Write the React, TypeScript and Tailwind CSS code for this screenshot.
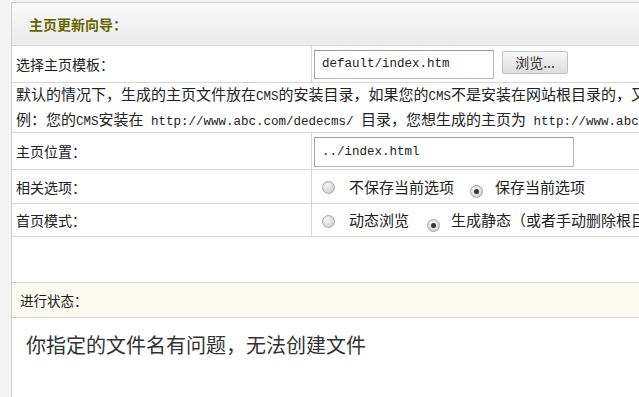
import React from "react";

const mono = "font-['Liberation_Mono',monospace] text-[12.5px]";

function Radio({ checked }: { checked?: boolean }) {
  return (
    <span className="relative inline-flex h-[13px] w-[13px] shrink-0 items-center justify-center rounded-full border border-[#a9a9a9] bg-[radial-gradient(circle_at_40%_35%,#f6f6f6_0%,#dcdcdc_55%,#c4c4c4_100%)]">
      {checked && <span className="h-[5px] w-[5px] rounded-full bg-[#333]" />}
    </span>
  );
}

export default function App() {
  return (
    <div className="h-[397px] w-[639px] overflow-hidden bg-[#f4f4f4] pl-[11px] pt-[2px] font-['Noto_Sans_CJK_SC',sans-serif] text-[#222]">
      <div className="flex h-[420px] w-[760px] flex-col border-l border-t border-[#cfcfcf] bg-white">
        {/* header */}
        <div className="flex h-[43px] shrink-0 items-center border-b border-[#d6d6d6] bg-gradient-to-b from-[#fafafa] to-[#ebebeb] pl-[17px]">
          <span className="text-[14px] font-bold leading-[20px] text-[#666600]">主页更新向导：</span>
        </div>

        {/* row 1 */}
        <div className="flex h-[37px] shrink-0 border-b border-[#d6d6d6]">
          <div className="flex w-[300px] shrink-0 items-center border-r border-[#d6d6d6] pl-[4px] text-[14px] leading-[20px]">
            选择主页模板：
          </div>
          <div className="flex items-center pl-[2px]">
            <div className={`flex h-[29px] w-[180px] items-center border border-[#b8b8b8] border-t-[#9a9a9a] border-l-[#a4a4a4] bg-white pl-[7px] text-[#222] ${mono}`}>
              default/index.htm
            </div>
            <div className="ml-[8px] flex h-[23px] w-[66px] -translate-y-[2px] items-center justify-center rounded-[2px] border border-[#c3c3c3] bg-gradient-to-b from-[#f7f7f7] to-[#dddddd] text-[14px] leading-[20px] text-[#333]">
              浏览...
            </div>
          </div>
        </div>

        {/* row 2 */}
        <div className="flex h-[50px] shrink-0 flex-col justify-center whitespace-nowrap border-b border-[#d6d6d6] pl-[4px] text-[15px] leading-[22px]">
          <div>
            默认的情况下，生成的主页文件放在<span className={mono}>CMS</span>的安装目录，如果您的<span className={mono}>CMS</span>不是安装在网站根目录的，又想生成主页到网站根目录，请用
          </div>
          <div>
            例：您的<span className={mono}>CMS</span>安装在<span className={mono}> http://www.abc.com/dedecms/ </span>目录，您想生成的主页为<span className={mono}> http://www.abc.com/index.html </span>
          </div>
        </div>

        {/* row 3 */}
        <div className="flex h-[37px] shrink-0 border-b border-[#d6d6d6]">
          <div className="flex w-[300px] shrink-0 items-center border-r border-[#d6d6d6] pl-[4px] text-[14px] leading-[20px]">
            主页位置：
          </div>
          <div className="flex items-center pl-[2px]">
            <div className={`mt-[2px] flex h-[30px] w-[260px] items-center border border-[#b8b8b8] border-t-[#9a9a9a] border-l-[#a4a4a4] bg-white pl-[7px] text-[#222] ${mono}`}>
              ../index.html
            </div>
          </div>
        </div>

        {/* row 4 */}
        <div className="flex h-[34px] shrink-0 border-b border-[#d6d6d6]">
          <div className="flex w-[300px] shrink-0 items-center border-r border-[#d6d6d6] pl-[4px] text-[14px] leading-[20px]">
            相关选项：
          </div>
          <div className="flex items-center whitespace-nowrap pl-[10px] text-[15px] leading-[20px]">
            <span className="mt-[2px]"><Radio /></span>
            <span className="ml-[14px]">不保存当前选项</span>
            <span className="ml-[16px] mt-[2px]"><Radio checked /></span>
            <span className="ml-[12px]">保存当前选项</span>
          </div>
        </div>

        {/* row 5 */}
        <div className="flex h-[33px] shrink-0 border-b border-[#d6d6d6]">
          <div className="flex w-[300px] shrink-0 items-center border-r border-[#d6d6d6] pl-[4px] text-[14px] leading-[20px]">
            首页模式：
          </div>
          <div className="flex items-center whitespace-nowrap pl-[10px] text-[15px] leading-[20px]">
            <span className="mt-[4px]"><Radio /></span>
            <span className="ml-[14px]">动态浏览</span>
            <span className="ml-[18px] mt-[4px]"><Radio checked /></span>
            <span className="ml-[11px]">生成静态（或者手动删除根目录下的index.html文件）</span>
          </div>
        </div>

        {/* empty */}
        <div className="h-[46px] shrink-0 border-b border-[#d6d6d6]" />

        {/* status label */}
        <div className="flex h-[35px] shrink-0 items-center border-b border-[#d6d6d6] bg-[#fafaef] pl-[8px] text-[13.5px] leading-[20px]">
          进行状态：
        </div>

        {/* message */}
        <div className="pl-[14px] pt-[13px] text-[20px] leading-[28px] text-[#333]">
          你指定的文件名有问题，无法创建文件
        </div>
      </div>
    </div>
  );
}
